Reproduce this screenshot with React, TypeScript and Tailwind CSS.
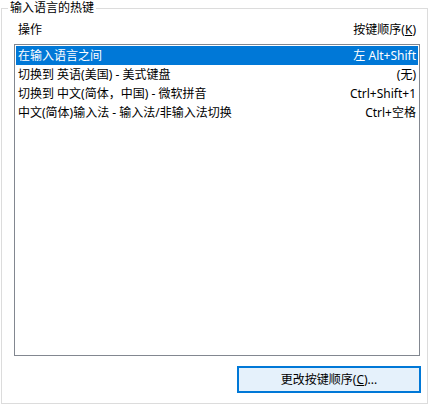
const rows = [
  { action: "在输入语言之间", keys: "左 Alt+Shift", selected: true },
  { action: "切换到 英语(美国) - 美式键盘", keys: "(无)" },
  { action: "切换到 中文(简体，中国) - 微软拼音", keys: "Ctrl+Shift+1" },
  { action: "中文(简体)输入法 - 输入法/非输入法切换", keys: "Ctrl+空格" },
];

const font = { fontFamily: '"Noto Sans", "Noto Sans CJK SC", sans-serif' };

export default function App() {
  return (
    <div className="w-[432px] h-[406px] bg-white pt-[8px] pl-[1px] text-[12px] text-black" style={font}>
      <div className="relative w-[427px] h-[396px] border border-[#dcdcdc]">
        <span className="absolute left-[6px] top-[-9px] bg-white px-[2px] leading-[16px]">输入语言的热键</span>

        <div className="flex items-center justify-between pl-[16px] pr-[11px] pt-[13px] h-[29px] leading-[16px]">
          <span>操作</span>
          <span>
            按键顺序(<span className="underline">K</span>)
          </span>
        </div>

        <div className="ml-[12px] mt-[6px] w-[406px] h-[312px] border border-[#828790] p-[1px]">
          {rows.map((r) => (
            <div
              key={r.action}
              className={`flex h-[19px] items-center justify-between px-[2px] leading-[19px] ${
                r.selected ? "bg-[#0078d7] text-white" : ""
              }`}
            >
              <span>{r.action}</span>
              <span>{r.keys}</span>
            </div>
          ))}
        </div>

        <div className="flex justify-end pr-[6px] pt-[10px]">
          <button
            type="button"
            className="w-[184px] h-[27px] border-2 border-[#0078d7] bg-[#e5f1fb] leading-[16px]"
          >
            更改按键顺序(<span className="underline">C</span>)...
          </button>
        </div>
      </div>
    </div>
  );
}
